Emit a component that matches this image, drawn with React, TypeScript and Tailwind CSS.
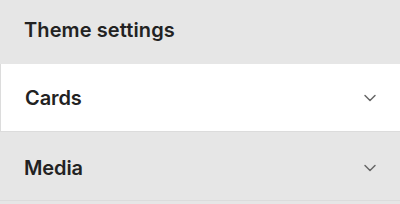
import { ChevronDown } from "lucide-react";

function SettingRow({ label, open }: { label: string; open?: boolean }) {
  return (
    <div
      className={
        open
          ? "flex h-[68px] items-center justify-between border-b border-l border-[#dcdcdc] bg-white pl-6 pr-5"
          : "flex h-[69px] items-center justify-between border-b border-[#dcdcdc] pt-1 pl-6 pr-5"
      }
    >
      <span className="text-[20px] font-semibold tracking-[-0.1px] text-[#222]">{label}</span>
      <ChevronDown className="h-5 w-5 text-[#666]" strokeWidth={1.75} />
    </div>
  );
}

export default function App() {
  return (
    <div className="h-[204px] w-[400px] bg-[#e6e6e6] font-['Inter',sans-serif]">
      <div className="flex h-16 items-center px-6 pb-1">
        <h2 className="text-[20px] font-semibold tracking-[0.1px] text-[#222]">Theme settings</h2>
      </div>
      <SettingRow label="Cards" open />
      <SettingRow label="Media" />
    </div>
  );
}
